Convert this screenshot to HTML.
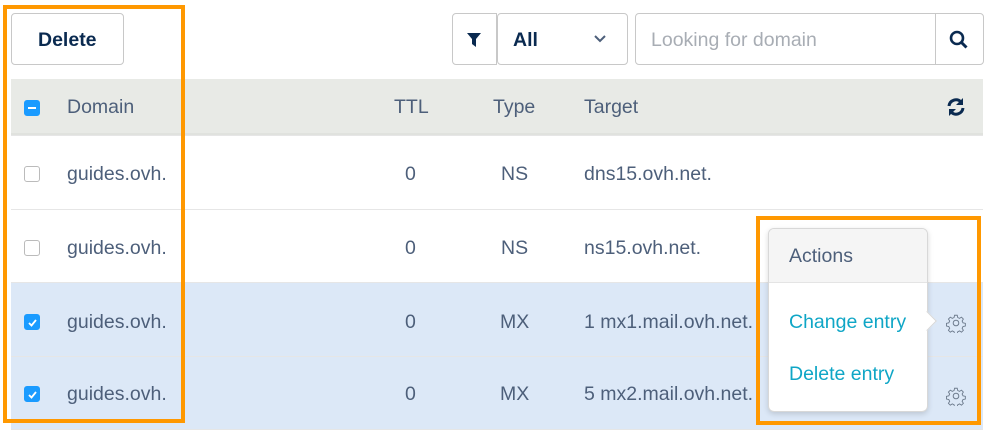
<!DOCTYPE html><html><head><style>
*{box-sizing:border-box;margin:0;padding:0}
body{width:1000px;height:440px;background:#fff;font-family:"Liberation Sans",sans-serif;color:#4d5f7a;position:relative;overflow:hidden}
.a{position:absolute}
.btn{border:1px solid #c8c8c8;border-radius:4px;background:#fff}
.t{position:absolute;font-size:19.5px;line-height:20px}
.cb{position:absolute;left:24px;width:16px;height:16px;border:1px solid #bbb;border-radius:3px;background:#fff}
.cb.on{background:#1a9bff;border-color:#1a9bff}
.row{position:absolute;left:11px;width:972px;height:74px;border-top:1px solid #e6e6e6}
.sel{background:#dce8f7}
</style></head><body>
<div class="a btn" style="left:11px;top:13px;width:113px;height:52px"></div>
<div class="t" style="left:38px;top:30px;font-weight:bold;color:#0a2a50">Delete</div>
<div class="a btn" style="left:452px;top:13px;width:45px;height:52px;border-radius:4px 0 0 4px"></div>
<svg class="a" style="left:466px;top:32px" width="16" height="16" viewBox="0 0 16 16"><path d="M1 1h14l-5 6v8l-4-3V7z" fill="#0a2a50"/></svg>
<div class="a btn" style="left:497px;top:13px;width:131px;height:52px"></div>
<div class="t" style="left:513px;top:30px;color:#0a2a50;font-weight:bold">All</div>
<svg class="a" style="left:593px;top:34px" width="14" height="10" viewBox="0 0 14 10"><path d="M2 2l5 5 5-5" stroke="#4d5f7a" stroke-width="2" fill="none"/></svg>
<div class="a btn" style="left:635px;top:13px;width:349px;height:52px"></div>
<div class="a" style="left:935px;top:14px;width:1px;height:50px;background:#c8c8c8"></div>
<div class="t" style="left:651px;top:30px;color:#a8adb4">Looking for domain</div>
<svg class="a" style="left:949px;top:30px" width="20" height="20" viewBox="0 0 20 20"><circle cx="8" cy="8" r="6" stroke="#0a2a50" stroke-width="2.6" fill="none"/><path d="M12.5 12.5l5 5" stroke="#0a2a50" stroke-width="3"/></svg>

<div class="a" style="left:11px;top:79px;width:972px;height:56px;background:#e8eae6;border-bottom:2px solid #e0e2de"></div>
<div class="cb on" style="top:100px"><div class="a" style="left:3px;top:6px;width:8px;height:2px;background:#fff"></div></div>
<div class="t" style="left:67px;top:97px">Domain</div>
<div class="t" style="left:394px;top:97px">TTL</div>
<div class="t" style="left:493px;top:97px">Type</div>
<div class="t" style="left:584px;top:97px">Target</div>
<svg class="a" style="left:946px;top:97px" width="20" height="20" viewBox="0 0 20 20"><path d="M3 9a7 7 0 0 1 12-4" stroke="#0a2a50" stroke-width="3" fill="none"/><path d="M17 1v7h-7z" fill="#0a2a50"/><path d="M17 11a7 7 0 0 1-12 4" stroke="#0a2a50" stroke-width="3" fill="none"/><path d="M3 19v-7h7z" fill="#0a2a50"/></svg>

<div class="row" style="top:135px"></div>
<div class="row" style="top:209px"></div>
<div class="row sel" style="top:282px"></div>
<div class="row sel" style="top:356px;border-bottom:1px solid #e6e6e6"></div>

<div class="cb" style="top:166px"></div><div class="t" style="left:67px;top:164px">guides.ovh.</div><div class="t" style="left:405px;top:164px">0</div><div class="t" style="left:501px;top:164px">NS</div><div class="t" style="left:584px;top:164px">dns15.ovh.net.</div>
<div class="cb" style="top:240px"></div><div class="t" style="left:67px;top:238px">guides.ovh.</div><div class="t" style="left:405px;top:238px">0</div><div class="t" style="left:501px;top:238px">NS</div><div class="t" style="left:584px;top:238px">ns15.ovh.net.</div>
<div class="cb on" style="top:314px"><svg class="a" style="left:2px;top:2px" width="11" height="11" viewBox="0 0 11 11"><path d="M2 6l2.5 2.5L9 3" stroke="#fff" stroke-width="1.8" fill="none"/></svg></div><div class="t" style="left:67px;top:312px">guides.ovh.</div><div class="t" style="left:405px;top:312px">0</div><div class="t" style="left:500px;top:312px">MX</div><div class="t" style="left:584px;top:312px">1 mx1.mail.ovh.net.</div>
<div class="cb on" style="top:386px"><svg class="a" style="left:2px;top:2px" width="11" height="11" viewBox="0 0 11 11"><path d="M2 6l2.5 2.5L9 3" stroke="#fff" stroke-width="1.8" fill="none"/></svg></div><div class="t" style="left:67px;top:384px">guides.ovh.</div><div class="t" style="left:405px;top:384px">0</div><div class="t" style="left:500px;top:384px">MX</div><div class="t" style="left:584px;top:384px">5 mx2.mail.ovh.net.</div>

<svg class="a" style="left:946px;top:313px" width="20" height="20" viewBox="0 0 20 20"><path d="M8.5 1.5h3l.5 2.5 2 1 2.2-1.4 2.1 2.1-1.4 2.2 1 2 2.6.6v3l-2.6.5-1 2 1.4 2.2-2.1 2.1-2.2-1.4-2 1-.5 2.6h-3l-.5-2.6-2-1-2.2 1.4-2.1-2.1 1.4-2.2-1-2-2.6-.5v-3l2.6-.6 1-2-1.4-2.2 2.1-2.1 2.2 1.4 2-1z" fill="none" stroke="#6c7a8c" stroke-width="1" transform="scale(.9) translate(1 1)"/><circle cx="10" cy="10" r="2.8" fill="none" stroke="#6c7a8c"/></svg>
<svg class="a" style="left:946px;top:386px" width="20" height="20" viewBox="0 0 20 20"><path d="M8.5 1.5h3l.5 2.5 2 1 2.2-1.4 2.1 2.1-1.4 2.2 1 2 2.6.6v3l-2.6.5-1 2 1.4 2.2-2.1 2.1-2.2-1.4-2 1-.5 2.6h-3l-.5-2.6-2-1-2.2 1.4-2.1-2.1 1.4-2.2-1-2-2.6-.5v-3l2.6-.6 1-2-1.4-2.2 2.1-2.1 2.2 1.4 2-1z" fill="none" stroke="#6c7a8c" stroke-width="1" transform="scale(.9) translate(1 1)"/><circle cx="10" cy="10" r="2.8" fill="none" stroke="#6c7a8c"/></svg>

<div class="a" style="left:768px;top:228px;width:160px;height:184px;background:#fff;border:1px solid #d8d8d8;border-radius:6px;box-shadow:0 2px 6px rgba(0,0,0,.15);overflow:hidden">
<div style="height:54px;background:#f5f5f5;border-bottom:1px solid #e4e4e4"></div></div>
<div class="a" style="left:920px;top:314px;width:14px;height:14px;background:#fff;transform:rotate(45deg);border-top:1px solid #d8d8d8;border-right:1px solid #d8d8d8"></div>
<div class="t" style="left:789px;top:246px">Actions</div>
<div class="t" style="left:789px;top:312px;color:#0fa6c6">Change entry</div>
<div class="t" style="left:789px;top:364px;color:#0fa6c6">Delete entry</div>

<div class="a" style="left:3px;top:5px;width:182px;height:418px;border:4px solid #ff9800"></div>
<div class="a" style="left:756px;top:216px;width:225px;height:209px;border:4px solid #ff9800"></div>
</body></html>
